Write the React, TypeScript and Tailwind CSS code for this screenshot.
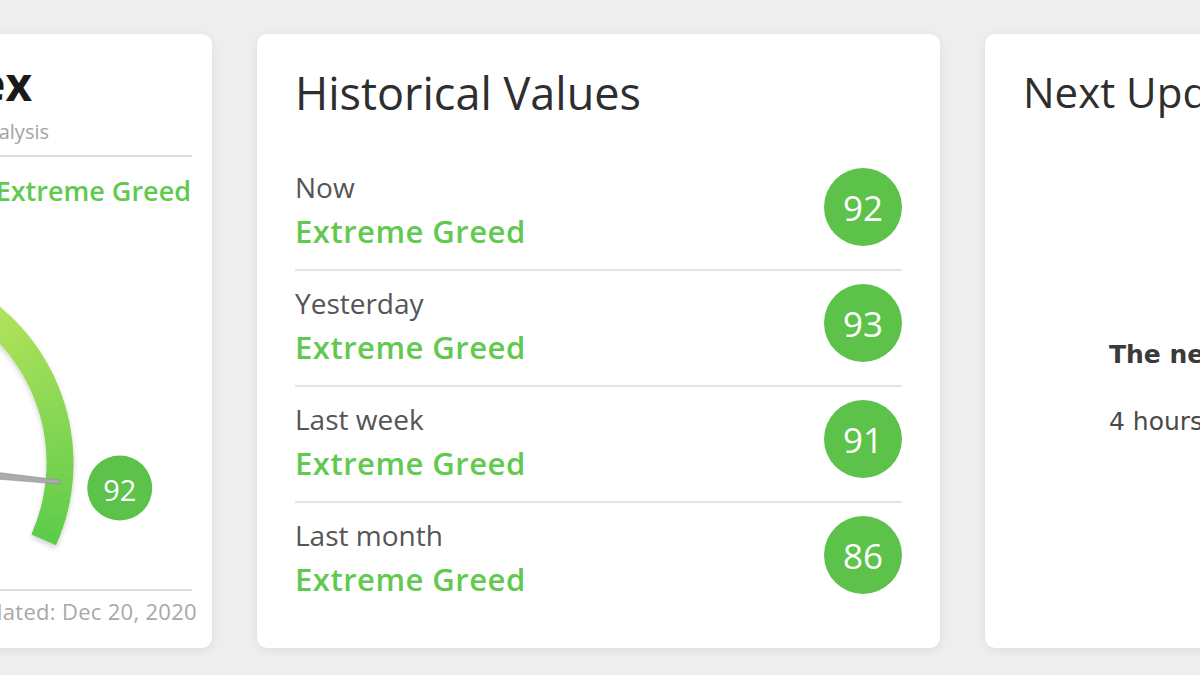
import React from "react";

type Row = { label: string; value: number };

const rows: Row[] = [
  { label: "Now", value: 92 },
  { label: "Yesterday", value: 93 },
  { label: "Last week", value: 91 },
  { label: "Last month", value: 86 },
];

// gauge colour stops, left (fear) to right (greed)
const STOPS: [number, number[]][] = [
  [0, [232, 64, 47]],
  [0.25, [245, 154, 35]],
  [0.45, [247, 214, 49]],
  [0.68, [176, 226, 92]],
  [1, [94, 203, 75]],
];

function colorAt(t: number) {
  for (let i = 1; i < STOPS.length; i++) {
    const [t1, c1] = STOPS[i];
    const [t0, c0] = STOPS[i - 1];
    if (t <= t1) {
      const k = (t - t0) / (t1 - t0);
      const c = c0.map((v, j) => Math.round(v + (c1[j] - v) * k));
      return `rgb(${c[0]},${c[1]},${c[2]})`;
    }
  }
  return "rgb(94,203,75)";
}

function polar(cx: number, cy: number, r: number, deg: number) {
  const a = (deg * Math.PI) / 180;
  return [cx + r * Math.cos(a), cy - r * Math.sin(a)];
}

function Gauge({ value }: { value: number }) {
  const cx = 300;
  const cy = 230;
  const r = 189;
  const start = 204;
  const sweep = 228;
  const n = 90;
  const segs = Array.from({ length: n }, (_, i) => {
    const a0 = start - (i * sweep) / n + (i === 0 ? 0 : 0.4);
    const a1 = start - ((i + 1) * sweep) / n;
    const [x0, y0] = polar(cx, cy, r, a0);
    const [x1, y1] = polar(cx, cy, r, a1);
    return {
      d: `M ${x0} ${y0} A ${r} ${r} 0 0 1 ${x1} ${y1}`,
      color: colorAt((i + 0.5) / n),
    };
  });

  const angle = start - (value / 100) * sweep;
  const [tx, ty] = polar(cx, cy, 190, angle);
  const [b1x, b1y] = polar(cx, cy, 6, angle + 90);
  const [b2x, b2y] = polar(cx, cy, 6, angle - 90);
  const [t1x, t1y] = polar(tx, ty, 2, angle + 90);
  const [t2x, t2y] = polar(tx, ty, 2, angle - 90);
  const [lx, ly] = polar(cx, cy, 250, angle);

  return (
    <svg width="600" height="340" viewBox="0 0 600 340">
      <defs>
        <filter id="arcShadow" x="-10%" y="-10%" width="120%" height="130%">
          <feDropShadow dx="0" dy="3" stdDeviation="2.5" floodColor="#000" floodOpacity="0.18" />
        </filter>
      </defs>
      <g filter="url(#arcShadow)">
        {segs.map((s, i) => (
          <path key={i} d={s.d} stroke={s.color} strokeWidth="27" fill="none" />
        ))}
      </g>
      <polygon
        points={`${b1x},${b1y} ${t1x},${t1y} ${t2x},${t2y} ${b2x},${b2y}`}
        fill="#ababab"
        stroke="#8f8f8f"
        strokeWidth="0.6"
      />
      <circle cx={cx} cy={cy} r="10" fill="#9a9a9a" />
      <circle cx={lx} cy={ly} r="32.5" fill="#5cc24a" />
      <text
        x={lx}
        y={ly + 1}
        textAnchor="middle"
        dominantBaseline="central"
        fill="#ffffff"
        fontSize="29"
        fontFamily="'Open Sans', sans-serif"
      >
        {value}
      </text>
    </svg>
  );
}

function ScoreCard() {
  return (
    <div className="flex h-[614px] w-[683px] shrink-0 flex-col rounded-[10px] bg-white px-[20px] pt-[26px] shadow-[0_2px_10px_rgba(0,0,0,0.08)] font-['Open_Sans',sans-serif]">
      <h1 className="mr-[160px] self-end whitespace-nowrap text-[46px] font-bold leading-none text-[#1a1a1a]">
        Fear &amp; Greed Index
      </h1>
      <p className="mr-[143px] mt-[16px] self-end whitespace-nowrap text-[20px] leading-none text-[#a3a3a3]">
        Multifactorial Crypto Market Sentiment Analysis
      </p>
      <div className="mt-[13px] h-[2px] bg-[#dcdcdc]" />
      <div className="mt-[20px] flex justify-between text-[27px] font-semibold leading-none">
        <span className="ml-[18px] text-[#333333]">Now:</span>
        <span className="mr-[1px] text-[#62c94f]">Extreme Greed</span>
      </div>
      <div className="mt-[29px] flex justify-center">
        <Gauge value={92} />
      </div>
      <div className="mt-[16px] h-[2px] bg-[#dcdcdc]" />
      <p className="-mr-[5px] mt-[9px] text-right text-[22px] tracking-[0.3px] leading-none text-[#a8a8a8]">
        Last updated: Dec 20, 2020
      </p>
    </div>
  );
}

function HistoryCard() {
  return (
    <div className="h-[614px] w-[683px] shrink-0 rounded-[10px] bg-white px-[38px] pt-[36px] shadow-[0_2px_10px_rgba(0,0,0,0.08)] font-['Open_Sans',sans-serif]">
      <h2 className="text-[45px] leading-none text-[#2e2e2e]">Historical Values</h2>
      <div className="mt-[40px]">
        {rows.map((row, i) => (
          <div
            key={row.label}
            className={`flex h-[116px] items-start justify-between pt-[13px] ${
              i < rows.length - 1 ? "border-b-2 border-[#e4e4e4]" : ""
            }`}
          >
            <div className="mt-[5px] flex flex-col">
              <span className="text-[28px] leading-none text-[#555555]">{row.label}</span>
              <span className="mt-[15px] text-[31px] font-semibold tracking-[0.5px] leading-none text-[#62c94f]">
                Extreme Greed
              </span>
            </div>
            <div className="flex h-[78px] w-[78px] items-center justify-center rounded-full bg-[#5cc24a] text-[35px] leading-none text-white">
              {row.value}
            </div>
          </div>
        ))}
      </div>
    </div>
  );
}

function UpdateCard() {
  return (
    <div className="h-[614px] w-[683px] shrink-0 rounded-[10px] bg-white px-[38px] pt-[37px] shadow-[0_2px_10px_rgba(0,0,0,0.08)] font-['Open_Sans',sans-serif]">
      <h2 className="text-[42px] leading-none text-[#2e2e2e]">Next Update</h2>
      <div className="mt-[229px] pl-[86px] font-['DejaVu_Sans',sans-serif]">
        <p className="text-[25px] font-bold leading-none text-[#3a3a3a]">
          The next update happens in:
        </p>
        <p className="mt-[42px] text-[25px] leading-none text-[#4a4a4a]">
          4 hours, 5 minutes and 36 seconds
        </p>
      </div>
    </div>
  );
}

export default function App() {
  return (
    <div className="h-[675px] w-[1200px] overflow-hidden bg-[#eeeeee] pt-[34px]">
      <div className="ml-[-471px] flex gap-[45px]">
        <ScoreCard />
        <HistoryCard />
        <UpdateCard />
      </div>
    </div>
  );
}
